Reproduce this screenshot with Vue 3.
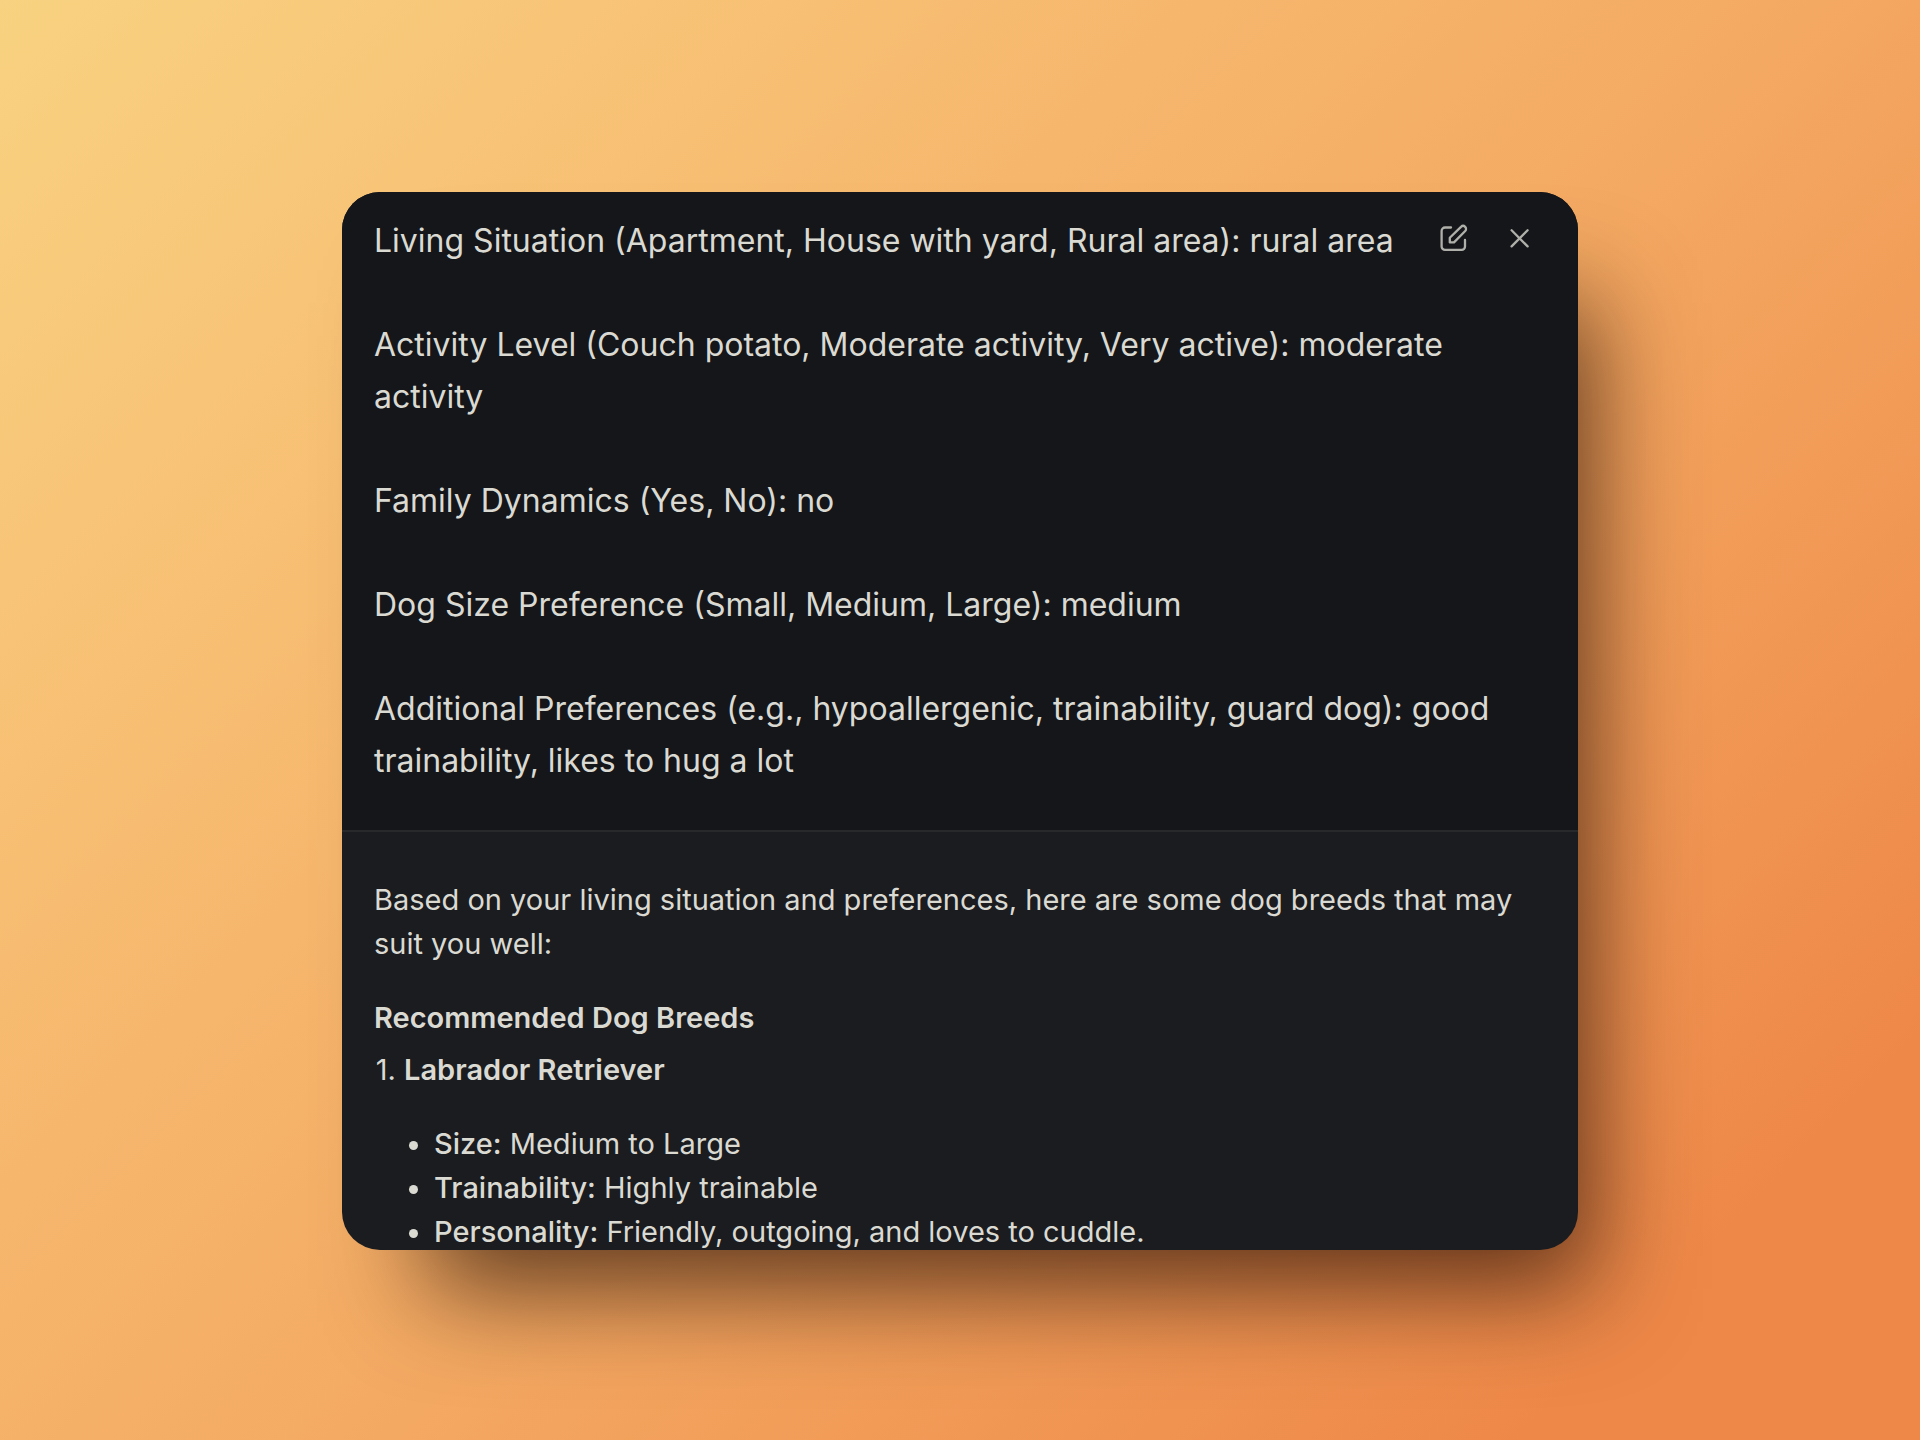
<script setup>
const answers = [
  'Living Situation (Apartment, House with yard, Rural area): rural area',
  'Activity Level (Couch potato, Moderate activity, Very active): moderate activity',
  'Family Dynamics (Yes, No): no',
  'Dog Size Preference (Small, Medium, Large): medium',
  'Additional Preferences (e.g., hypoallergenic, trainability, guard dog): good trainability, likes to hug a lot',
]

const breeds = [
  {
    name: 'Labrador Retriever',
    traits: [
      { label: 'Size', value: 'Medium to Large' },
      { label: 'Trainability', value: 'Highly trainable' },
      { label: 'Personality', value: 'Friendly, outgoing, and loves to cuddle.' },
    ],
  },
]
</script>

<template>
  <main class="backdrop">
    <article class="card">
      <div class="actions">
        <button type="button" class="action" aria-label="Edit">
          <svg class="icon" viewBox="0 0 32 32" aria-hidden="true">
            <path d="M13 5.5H7a3.4 3.4 0 0 0-3.4 3.4v15.6A3.4 3.4 0 0 0 7 27.9h16.6a3.4 3.4 0 0 0 3.4-3.4V18" />
            <path d="M11.8 20.4v-4.6L23 4.9a2.9 2.9 0 0 1 4.2 4.1L16 20.4z" />
          </svg>
        </button>
        <button type="button" class="action" aria-label="Close">
          <svg class="icon" viewBox="0 0 32 32" aria-hidden="true">
            <path d="M7.6 8.2l16 16.2M23.6 8.2l-16 16.2" />
          </svg>
        </button>
      </div>

      <section class="question">
        <p v-for="answer in answers" :key="answer">{{ answer }}</p>
      </section>

      <section class="reply">
        <p class="intro">
          Based on your living situation and preferences, here are some dog breeds that may suit you well:
        </p>
        <h2>Recommended Dog Breeds</h2>
        <ol class="breeds">
          <li v-for="breed in breeds" :key="breed.name">
            <strong>{{ breed.name }}</strong>
            <ul class="traits">
              <li v-for="trait in breed.traits" :key="trait.label">
                <strong>{{ trait.label }}:</strong> {{ trait.value }}
              </li>
            </ul>
          </li>
        </ol>
      </section>
    </article>
  </main>
</template>

<style>
body {
  margin: 0;
}
</style>

<style scoped>
.backdrop {
  box-sizing: border-box;
  min-height: 100vh;
  display: flex;
  align-items: center;
  justify-content: center;
  padding: 66px 64px 64px;
  background: linear-gradient(135deg, #f8d280 0%, #f8c477 18%, #f4a962 54%, #ee8848 88%);
  font-family: Inter, 'Liberation Sans', sans-serif;
  color: #dadad3;
}

.card {
  position: relative;
  width: 100%;
  max-width: 1236px;
  border-radius: 38px;
  overflow: hidden;
  background: #1b1c1f;
  box-shadow: 50px 75px 100px -36px rgba(28, 8, 0, 0.68);
}

.actions {
  position: absolute;
  top: 30px;
  right: 42px;
  display: flex;
  gap: 34px;
}

.action {
  display: flex;
  padding: 0;
  border: 0;
  background: none;
  color: #b0b0ab;
  cursor: pointer;
}

.icon {
  width: 32px;
  height: 32px;
  fill: none;
  stroke: currentColor;
  stroke-width: 2.3;
  stroke-linecap: round;
  stroke-linejoin: round;
}

.question {
  padding: 23px 32px 43px;
  background: #15161a;
  border-bottom: 2px solid #28292b;
  font-size: 32px;
  line-height: 52px;
}

.question p {
  margin: 0 0 52px;
}

.question p:last-child {
  margin-bottom: 0;
}

.reply {
  padding: 46px 32px 0;
  font-size: 29px;
  line-height: 44px;
}

.intro {
  margin: 0 0 30px;
}

h2 {
  margin: 0;
  font-size: inherit;
  font-weight: 600;
}

strong {
  font-weight: 600;
}

/* The last row runs slightly past the card's lower edge. */
.breeds {
  margin: 8px 0 -4px;
  padding-left: 30px;
}

.breeds li::marker {
  font-variant-numeric: normal;
}

.traits {
  margin: 30px 0 0;
  padding-left: 30px;
  list-style: disc;
}

.traits strong {
  font-weight: 500;
}
</style>
